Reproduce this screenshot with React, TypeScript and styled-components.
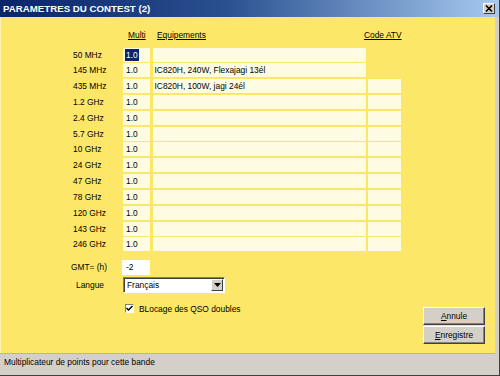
import { Fragment } from "react";
import styled, { createGlobalStyle } from "styled-components";

const GlobalStyle = createGlobalStyle`
  html, body {
    margin: 0;
    padding: 0;
  }
  body {
    font-family: "Liberation Sans", Arial, sans-serif;
    background: #fff;
  }
`;

const Window = styled.div`
  width: 500px;
  height: 376px;
  box-sizing: border-box;
  display: flex;
  flex-direction: column;
  background: #d4d0c8;
  border-right: 1px solid #404040;
  border-bottom: 1px solid #404040;
  overflow: hidden;
`;
const TitleBar = styled.div`
  height: 17px;
  flex: none;
  display: flex;
  align-items: center;
  justify-content: space-between;
  padding: 0 4px 0 3px;
  background: linear-gradient(to right, #0a246a 0%, #2a5090 45%, #a6caf0 100%);
`;
const TitleText = styled.span`
  color: #fff;
  font-weight: bold;
  font-size: 9.7px;
`;
const CloseButton = styled.div`
  width: 12px;
  height: 11px;
  box-sizing: border-box;
  display: flex;
  align-items: center;
  justify-content: center;
  background: #d4d0c8;
  border-top: 1px solid #fff;
  border-left: 1px solid #fff;
  border-right: 1px solid #404040;
  border-bottom: 1px solid #404040;
`;
const Client = styled.div`
  flex: 1;
  display: flex;
  flex-direction: column;
  padding: 0 4px 4px 0;
  min-height: 0;
`;
const Body = styled.div`
  flex: 1;
  display: flex;
  background: #fde769;
  border-left: 1px solid #fef3b0;
`;
const Form = styled.div`
  flex: 1;
  padding: 12px 0 0 72px;
`;
const columns = "47.5px 27px 213px 33px";
const HeaderRow = styled.div`
  display: grid;
  grid-template-columns: ${columns};
  column-gap: 2.5px;
  height: 12px;
  margin-bottom: 6.5px;
  font-size: 8.4px;
  line-height: 12px;
  color: #000;
`;
const HeaderLabel = styled.span<{ $indent: number; $col: number }>`
  grid-column: ${(p) => p.$col};
  margin-left: ${(p) => p.$indent}px;
  text-decoration: underline;
  white-space: nowrap;
`;
const BandGrid = styled.div`
  display: grid;
  grid-template-columns: ${columns};
  grid-auto-rows: 14px;
  column-gap: 2.5px;
  row-gap: 1.83px;
  font-size: 8.4px;
  line-height: 14px;
`;
const BandLabel = styled.span`
  color: #000;
  white-space: nowrap;
`;
const Cell = styled.div<{ $pad?: number }>`
  background: #fffce2;
  padding-left: ${(p) => p.$pad ?? 3}px;
  white-space: nowrap;
  overflow: hidden;
  color: #000;
`;
const Selected = styled.span`
  background: #0a246a;
  color: #fff;
  padding: 1px 1px;
  margin-left: -1px;
`;
const Fields = styled.div`
  margin-top: 8.5px;
  display: flex;
  flex-direction: column;
  font-size: 8.4px;
`;
const FieldRow = styled.div<{ $top: number }>`
  display: flex;
  align-items: center;
  margin-top: ${(p) => p.$top}px;
`;
const FieldLabel = styled.span<{ $indent: number }>`
  width: ${(p) => 50 - p.$indent}px;
  margin-left: ${(p) => p.$indent}px;
  white-space: nowrap;
`;
const GmtInput = styled.div`
  width: 28px;
  height: 15px;
  margin-left: -1px;
  box-sizing: border-box;
  background: #fff;
  padding-left: 4px;
  line-height: 15px;
`;
const Select = styled.div`
  width: 102px;
  height: 16px;
  box-sizing: border-box;
  display: flex;
  align-items: stretch;
  background: #fff;
  border-top: 1px solid #808080;
  border-left: 1px solid #808080;
  border-right: 1px solid #fff;
  border-bottom: 1px solid #fff;
  box-shadow: inset 1px 1px 0 #404040;
`;
const SelectValue = styled.span`
  flex: 1;
  padding-left: 3px;
  line-height: 14px;
`;
const SelectArrow = styled.span`
  width: 12px;
  margin: 1px 1px 1px 0;
  box-sizing: border-box;
  display: flex;
  align-items: center;
  justify-content: center;
  background: #d4d0c8;
  border-top: 1px solid #fff;
  border-left: 1px solid #fff;
  border-right: 1px solid #404040;
  border-bottom: 1px solid #404040;
`;
const CheckBox = styled.span`
  width: 9px;
  height: 9px;
  box-sizing: border-box;
  margin-left: 2px;
  display: flex;
  align-items: center;
  justify-content: center;
  background: #fff;
  border-top: 1px solid #808080;
  border-left: 1px solid #808080;
  border-right: 1px solid #fff;
  border-bottom: 1px solid #fff;
`;
const CheckLabel = styled.span`
  margin-left: 5px;
`;
const ButtonColumn = styled.div`
  display: flex;
  flex-direction: column;
  justify-content: flex-end;
  gap: 1px;
  padding: 0 10px 9px 0;
`;
const Button = styled.div`
  width: 62px;
  height: 18px;
  box-sizing: border-box;
  display: flex;
  align-items: center;
  justify-content: center;
  font-size: 8.4px;
  color: #000;
  background: #d4d0c8;
  border-top: 1px solid #fff;
  border-left: 1px solid #fff;
  border-right: 1px solid #404040;
  border-bottom: 1px solid #404040;
  box-shadow: inset -1px -1px 0 #808080;
`;
const StatusBar = styled.div`
  height: 18px;
  flex: none;
  box-sizing: border-box;
  padding-left: 4px;
  font-size: 8.4px;
  line-height: 17px;
  color: #000;
  border-top: 1px solid #b8b4ac;
`;

type Band = {
  name: string;
  multi: string;
  equip: string;
  code: boolean;
  selected?: boolean;
};

const bands: Band[] = [
  { name: "50 MHz", multi: "1.0", equip: "", code: false, selected: true },
  { name: "145 MHz", multi: "1.0", equip: "IC820H, 240W, Flexajagi 13él", code: false },
  { name: "435 MHz", multi: "1.0", equip: "IC820H, 100W, jagi 24él", code: true },
  { name: "1.2 GHz", multi: "1.0", equip: "", code: true },
  { name: "2.4 GHz", multi: "1.0", equip: "", code: true },
  { name: "5.7 GHz", multi: "1.0", equip: "", code: true },
  { name: "10 GHz", multi: "1.0", equip: "", code: true },
  { name: "24 GHz", multi: "1.0", equip: "", code: true },
  { name: "47 GHz", multi: "1.0", equip: "", code: true },
  { name: "78 GHz", multi: "1.0", equip: "", code: true },
  { name: "120 GHz", multi: "1.0", equip: "", code: true },
  { name: "143 GHz", multi: "1.0", equip: "", code: true },
  { name: "246 GHz", multi: "1.0", equip: "", code: true },
];

const App = () => {
  return (
    <Window>
      <GlobalStyle />
      <TitleBar>
        <TitleText>PARAMETRES DU CONTEST (2)</TitleText>
        <CloseButton>
          <svg width="8" height="7" viewBox="0 0 8 7">
            <path d="M1 0.5 L7 6.5 M7 0.5 L1 6.5" stroke="#000" strokeWidth="1.6" />
          </svg>
        </CloseButton>
      </TitleBar>
      <Client>
        <Body>
          <Form>
            <HeaderRow>
              <HeaderLabel $col={2} $indent={5}>Multi</HeaderLabel>
              <HeaderLabel $col={3} $indent={4.5}>Equipements</HeaderLabel>
              <HeaderLabel $col={4} $indent={-4}>Code ATV</HeaderLabel>
            </HeaderRow>
            <BandGrid>
              {bands.map((b) => (
                <Fragment key={b.name}>
                  <BandLabel>{b.name}</BandLabel>
                  <Cell>{b.selected ? <Selected>{b.multi}</Selected> : b.multi}</Cell>
                  <Cell $pad={2}>{b.equip}</Cell>
                  {b.code ? <Cell /> : <span />}
                </Fragment>
              ))}
            </BandGrid>
            <Fields>
              <FieldRow $top={0}>
                <FieldLabel $indent={-2}>GMT= (h)</FieldLabel>
                <GmtInput>-2</GmtInput>
              </FieldRow>
              <FieldRow $top={2}>
                <FieldLabel $indent={3}>Langue</FieldLabel>
                <Select>
                  <SelectValue>Français</SelectValue>
                  <SelectArrow>
                    <svg width="7" height="4" viewBox="0 0 7 4">
                      <path d="M0 0 H7 L3.5 4 Z" fill="#000" />
                    </svg>
                  </SelectArrow>
                </Select>
              </FieldRow>
              <FieldRow $top={11}>
                <FieldLabel $indent={0} />
                <CheckBox>
                  <svg width="7" height="7" viewBox="0 0 7 7">
                    <path d="M0.5 3 L2.5 5 L6.5 1" stroke="#000" strokeWidth="1.5" fill="none" />
                  </svg>
                </CheckBox>
                <CheckLabel>BLocage des QSO doubles</CheckLabel>
              </FieldRow>
            </Fields>
          </Form>
          <ButtonColumn>
            <Button>
              <u>A</u>nnule
            </Button>
            <Button>
              <u>E</u>nregistre
            </Button>
          </ButtonColumn>
        </Body>
        <StatusBar>Multiplicateur de points pour cette bande</StatusBar>
      </Client>
    </Window>
  );
};

export default App;
